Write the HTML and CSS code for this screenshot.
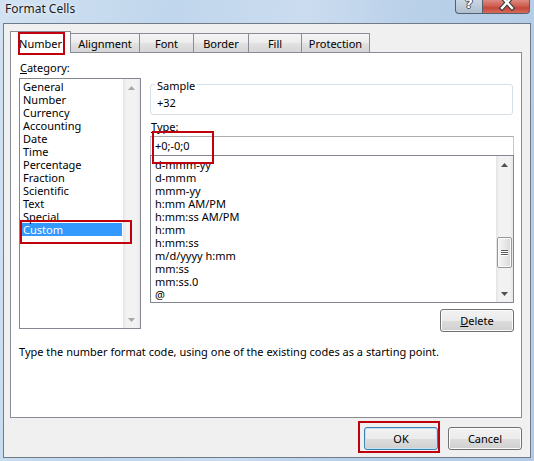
FILE: index.html
```html
<!DOCTYPE html>
<html>
<head>
<meta charset="utf-8">
<title>Format Cells</title>
<link rel="stylesheet" href="styles.css">
</head>
<body>
<div class="window">
  <div class="titlebar">
    <span class="title">Format Cells</span>
    <div class="caption">
      <div class="cap help"><span class="q">?</span></div>
      <div class="cap close">
        <svg width="47" height="13" viewBox="0 0 47 13">
          <path d="M19 -3 L29 8 M29 -3 L19 8" stroke="#3b3b3b" stroke-width="4.6" stroke-linecap="square" fill="none"/>
          <path d="M19 -3 L29 8 M29 -3 L19 8" stroke="#ffffff" stroke-width="2.4" stroke-linecap="square" fill="none"/>
        </svg>
      </div>
    </div>
  </div>
  <div class="client">
    <div class="tabs">
      <div class="tab active t-number">Number</div>
      <div class="tab t-align">Alignment</div>
      <div class="tab t-font">Font</div>
      <div class="tab t-border">Border</div>
      <div class="tab t-fill">Fill</div>
      <div class="tab t-prot">Protection</div>
    </div>
    <div class="panel">
      <div class="panel-body">
        <div class="col-left">
          <div class="label"><u>C</u>ategory:</div>
          <div class="listbox cat-list">
            <div class="items">
              <div class="item">General</div>
              <div class="item">Number</div>
              <div class="item">Currency</div>
              <div class="item">Accounting</div>
              <div class="item">Date</div>
              <div class="item">Time</div>
              <div class="item">Percentage</div>
              <div class="item">Fraction</div>
              <div class="item">Scientific</div>
              <div class="item">Text</div>
              <div class="item">Special</div>
              <div class="item sel">Custom</div>
            </div>
            <div class="vscroll disabled">
              <div class="sb-btn"><svg width="7" height="4" viewBox="0 0 7 4"><polygon points="3.5,0 7,4 0,4"/></svg></div>
              <div class="sb-track"></div>
              <div class="sb-btn"><svg width="7" height="4" viewBox="0 0 7 4"><polygon points="0,0 7,0 3.5,4"/></svg></div>
            </div>
          </div>
        </div>
        <div class="col-right">
          <fieldset class="sample">
            <legend>Sample</legend>
            <div class="sample-val">+32</div>
          </fieldset>
          <div class="label type-label"><u>T</u>ype:</div>
          <div class="textbox">+0;-0;0</div>
          <div class="listbox type-list">
            <div class="items">
              <div class="item">d-mmm-yy</div>
              <div class="item">d-mmm</div>
              <div class="item">mmm-yy</div>
              <div class="item">h:mm AM/PM</div>
              <div class="item">h:mm:ss AM/PM</div>
              <div class="item">h:mm</div>
              <div class="item">h:mm:ss</div>
              <div class="item">m/d/yyyy h:mm</div>
              <div class="item">mm:ss</div>
              <div class="item">mm:ss.0</div>
              <div class="item">@</div>
            </div>
            <div class="vscroll">
              <div class="sb-btn"><svg width="7" height="4" viewBox="0 0 7 4"><polygon points="3.5,0 7,4 0,4"/></svg></div>
              <div class="sb-track">
                <div class="thumb"><span></span><span></span><span></span></div>
              </div>
              <div class="sb-btn"><svg width="7" height="4" viewBox="0 0 7 4"><polygon points="0,0 7,0 3.5,4"/></svg></div>
            </div>
          </div>
          <div class="btn-row">
            <button class="btn delete"><u>D</u>elete</button>
          </div>
        </div>
      </div>
      <div class="hint">Type the number format code, using one of the existing codes as a starting point.</div>
    </div>
    <div class="dialog-buttons">
      <button class="btn default">OK</button>
      <button class="btn">Cancel</button>
    </div>
  </div>
  <div class="mark m-number"></div>
  <div class="mark m-custom"></div>
  <div class="mark m-type"></div>
  <div class="mark m-ok"></div>
</div>
</body>
</html>
```
FILE: styles.css
```css
html, body {
  margin: 0;
  padding: 0;
}
body {
  width: 534px;
  height: 461px;
  overflow: hidden;
  font-family: "Noto Sans", "Open Sans", sans-serif;
  font-size: 11px;
  line-height: 13px;
  color: #000;
}
.window {
  position: relative;
  width: 534px;
  height: 461px;
  display: flex;
  flex-direction: column;
  background: linear-gradient(100deg, #d2e2f2 0%, #c0d6ec 28%, #cbdcef 50%, #b9d0e9 68%, #b3cbe6 100%);
}
.titlebar {
  height: 23px;
  box-sizing: border-box;
  padding: 0 4px 0 5px;
  display: flex;
  justify-content: space-between;
  align-items: flex-start;
}
.title {
  padding-top: 2px;
  font-size: 12px;
  line-height: 13px;
  color: #1b1b1b;
  text-shadow: 0 0 5px #eaf2fb, 0 0 3px #eaf2fb;
}
.caption {
  display: flex;
}
.cap {
  height: 14px;
  box-sizing: border-box;
  border: 1px solid #55606e;
  border-top: none;
  overflow: hidden;
}
.cap.help {
  width: 27px;
  border-right: none;
  border-radius: 0 0 0 4px;
  background: linear-gradient(#cad7e4, #aebfd1);
  display: flex;
  justify-content: center;
}
.q {
  font-family: "DejaVu Sans", sans-serif;
  font-weight: bold;
  font-size: 13px;
  line-height: 12px;
  margin-top: -2px;
  color: #ffffff;
  text-shadow: 1px 0 0 #4a4f57, -1px 0 0 #4a4f57, 0 1px 0 #4a4f57, 0 -1px 0 #4a4f57;
}
.cap.close {
  width: 48px;
  border-radius: 0 0 4px 0;
  background: linear-gradient(#dd8a80 0%, #cf5f52 45%, #c4473a 60%, #d66a5c 100%);
}
.cap.close svg {
  display: block;
}
.client {
  margin: 0 3px 3px 3px;
  height: 435px;
  box-sizing: border-box;
  border: 1px solid #6f7b88;
  background: #f0f0f0;
  display: flex;
  flex-direction: column;
}
.tabs {
  position: relative;
  z-index: 1;
  display: flex;
  align-items: flex-end;
  height: 21px;
  margin: 7px 0 0 6px;
}
.tab {
  box-sizing: border-box;
  height: 19px;
  padding-top: 3px;
  margin-left: -1px;
  border: 1px solid #898c95;
  border-bottom: none;
  text-align: center;
  white-space: nowrap;
  background: linear-gradient(#f4f4f4 0%, #ededed 45%, #e0e0e0 55%, #d6d6d6 100%);
}
.tab.active {
  margin-left: 0;
  height: 22px;
  padding-top: 5px;
  margin-bottom: -1px;
  background: #ffffff;
  position: relative;
  z-index: 2;
}
.t-number { width: 61px; }
.t-align { width: 70px; }
.t-font { width: 55px; }
.t-border { width: 56px; }
.t-fill { width: 54px; }
.t-prot { width: 69px; }
.panel {
  margin-left: 6px;
  width: 512px;
  height: 366px;
  box-sizing: border-box;
  border: 1px solid #898c95;
  background: #ffffff;
  padding: 8px 7px 0 8px;
}
.panel-body {
  display: flex;
  align-items: flex-start;
  gap: 9px;
}
.col-left {
  width: 122px;
}
.col-right {
  width: 364px;
}
.label {
  padding-left: 1px;
  white-space: nowrap;
}
.listbox {
  box-sizing: border-box;
  border: 1px solid #828790;
  display: flex;
  overflow: hidden;
  background: #fff;
}
.cat-list {
  margin-top: 4px;
  height: 251px;
}
.cat-list .items {
  width: 103px;
  box-sizing: border-box;
  padding: 1px 1px 0 2px;
}
.item {
  height: 13px;
  padding-left: 1px;
  white-space: nowrap;
}
.item.sel {
  background: #3399ff;
  color: #ffffff;
}
.vscroll {
  width: 17px;
  display: flex;
  flex-direction: column;
  background: linear-gradient(to right, #e4e4e4 0%, #f2f2f2 20%, #f2f2f2 80%, #e8e8e8 100%);
}
.sb-btn {
  height: 17px;
  display: flex;
  align-items: center;
  justify-content: center;
}
.sb-btn svg {
  display: block;
  fill: #505050;
}
.vscroll.disabled .sb-btn svg {
  fill: #a8a8a8;
}
.sb-track {
  flex: 1;
  padding-top: 64px;
}
.thumb {
  box-sizing: border-box;
  width: 15px;
  height: 31px;
  margin-left: 1px;
  border: 1px solid #979797;
  border-radius: 2px;
  background: linear-gradient(to right, #f6f6f6 0%, #e9e9e9 50%, #d8d8d8 100%);
  box-shadow: inset 0 0 0 1px #fbfbfb;
  display: flex;
  flex-direction: column;
  align-items: center;
  justify-content: center;
  gap: 1px;
}
.thumb span {
  display: block;
  width: 7px;
  height: 1px;
  background: #5a5a5a;
  box-shadow: 0 1px 0 #ffffff;
}
.sample {
  margin: 15px 1px 0 0;
  padding: 4px 4px 5px 4px;
  border: 1px solid #d5dfe5;
  border-radius: 3px;
  min-width: 0;
}
.sample legend {
  padding: 3px 2px 0 2px;
  line-height: 13px;
}
.sample-val {
  padding-left: 2px;
}
.type-label {
  margin-top: 5px;
}
.textbox {
  margin-top: 3px;
  height: 20px;
  box-sizing: border-box;
  border: 1px solid #abadb3;
  border-left-color: #c5c7cc;
  border-right-color: #c5c7cc;
  padding-left: 4px;
  line-height: 18px;
  background: #fff;
}
.type-list {
  margin-top: -1px;
  height: 148px;
}
.type-list .items {
  width: 345px;
  box-sizing: border-box;
  padding: 2px 0 0 3px;
}
.btn-row {
  display: flex;
  justify-content: flex-end;
  margin-top: 6px;
}
.btn {
  width: 74px;
  height: 23px;
  box-sizing: border-box;
  padding: 0;
  margin: 0;
  font-family: inherit;
  font-size: 11px;
  line-height: 19px;
  color: #000;
  text-align: center;
  border: 1px solid #707070;
  border-radius: 3px;
  background: linear-gradient(#f2f2f2 0%, #ebebeb 50%, #dddddd 51%, #cfcfcf 100%);
  box-shadow: inset 0 0 0 1px #fbfbfb;
}
.btn.default {
  border-color: #3c7fb1;
  box-shadow: inset 0 0 0 1px #bfe3f7;
}
.hint {
  margin-top: 13px;
  white-space: nowrap;
}
.dialog-buttons {
  display: flex;
  justify-content: flex-end;
  gap: 10px;
  margin-top: 9px;
  padding-right: 8px;
}
.mark {
  position: absolute;
  z-index: 5;
  box-sizing: border-box;
  border: 2px solid #c0000c;
}
.m-number { left: 18px; top: 32px; width: 47px; height: 23px; }
.m-custom { left: 20px; top: 220px; width: 112px; height: 24px; }
.m-type { left: 152px; top: 131px; width: 62px; height: 33px; }
.m-ok { left: 358px; top: 421px; width: 82px; height: 32px; }
```
